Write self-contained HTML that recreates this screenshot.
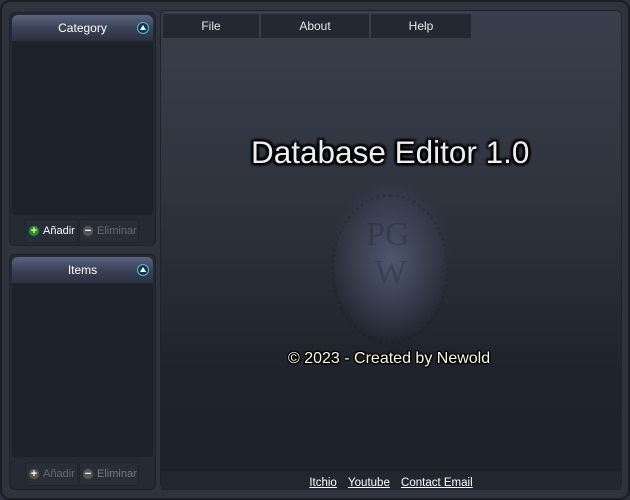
<!DOCTYPE html><html><head><style>
*{margin:0;padding:0;box-sizing:border-box}
body{width:630px;height:500px;overflow:hidden;background:#2c313c;font-family:"Liberation Sans","DejaVu Sans",sans-serif;position:relative}
.frame{position:absolute;left:0;top:0;width:630px;height:500px;border:2px solid #1a1d24;border-radius:10px;background:#2e333e}
.panel{position:absolute;background:#262a34;border:1px solid #1e222a;border-radius:6px}
.hdr{position:absolute;left:2px;right:2px;top:2px;height:26px;border-radius:6px 6px 0 0;background:linear-gradient(#5a6480,#3a4257 50%,#2b3140);color:#fff;font-size:12px;text-align:center;line-height:26px}
.tri{position:absolute;right:4px;top:7px;width:12px;height:12px;border-radius:50%;background:#0c3a4c;border:1.5px solid #5ab8d0}
.tri:after{content:"";position:absolute;left:2px;top:2px;border-left:3px solid transparent;border-right:3px solid transparent;border-bottom:5px solid #fff}
.list{position:absolute;left:2px;right:2px;background:#1d212a;border-radius:0 0 4px 4px}
.btn{position:absolute;height:24px;background:#282d37;border:1px solid #20242c;border-radius:3px;font-size:11px;line-height:22px;padding-left:17px;white-space:nowrap;overflow:hidden}
.ic{position:absolute;left:2px;top:5px;width:12px;height:12px;border-radius:50%;color:#fff;font-size:11px;line-height:11px;text-align:center;font-weight:bold}
.main{position:absolute;left:160px;top:10px;width:462px;height:480px;border:1px solid #1f232b;border-radius:6px;background:radial-gradient(ellipse 60px 80px at 230px 250px,#4e5770,rgba(0,0,0,0) 100%),linear-gradient(#3a3f4c,#2e333e 40%,#1f232b 75%,#1e222a)}
.tab{position:absolute;top:3px;height:24px;background:#232832;color:#e8e8e8;font-size:12px;text-align:center;line-height:24px}
.t1{font-size:31.5px;color:#eee;position:absolute;left:90px;top:123px;text-shadow:0 0 3px #000,2px 2px 2px #000,-2px -2px 2px #000,2px -2px 2px #000,-2px 2px 2px #000}
.t2{font-size:16px;color:#fffbe0;position:absolute;left:127px;top:339px;text-shadow:0 0 2px #000,1px 1px 1px #000,-1px -1px 1px #000,1px -1px 1px #000,-1px 1px 1px #000}
.foot{position:absolute;left:0;right:0;top:460px;height:19px;background:#22262e;text-align:center;font-size:11.5px;color:#fff;line-height:24px}
.foot span{text-decoration:underline;margin:0 4px}
</style></head><body>
<div class="frame"></div>
<div class="panel" style="left:9px;top:12px;width:147px;height:234px">
<div class="hdr">Category<div class="tri"></div></div>
<div class="list" style="top:28px;height:174px"></div>
<div class="btn" style="left:15px;top:206px;width:53px;color:#fff"><div class="ic" style="background:#2a8a3a;border:1px solid #0c3a4c;color:#ff6">+</div>Añadir</div>
<div class="btn" style="left:69px;top:206px;width:60px;color:#666b74"><div class="ic" style="background:#555;border:1px solid #333">−</div>Eliminar</div>
</div>
<div class="panel" style="left:9px;top:254px;width:147px;height:236px">
<div class="hdr">Items<div class="tri"></div></div>
<div class="list" style="top:28px;height:174px"></div>
<div class="btn" style="left:15px;top:207px;width:53px;color:#666b74"><div class="ic" style="background:#555;border:1px solid #333">+</div>Añadir</div>
<div class="btn" style="left:69px;top:207px;width:60px;color:#777c84"><div class="ic" style="background:#555;border:1px solid #333">−</div>Eliminar</div>
</div>
<div class="main">
<div class="tab" style="left:2px;width:96px">File</div>
<div class="tab" style="left:100px;width:108px">About</div>
<div class="tab" style="left:210px;width:100px">Help</div>
<div style="position:absolute;left:170px;top:183px;width:118px;height:150px;border-radius:50%;border:3px dotted rgba(20,24,32,.2)"></div>
<div style="position:absolute;left:205px;top:205px;font-family:'Liberation Serif',serif;font-size:34px;color:rgba(30,34,44,.3)">PG<br>&nbsp;W</div>
<div class="t1">Database Editor 1.0</div>
<div class="t2">© 2023 - Created by Newold</div>
<div class="foot"><span>Itchio</span> <span>Youtube</span> <span>Contact Email</span></div>
</div>
</body></html>
